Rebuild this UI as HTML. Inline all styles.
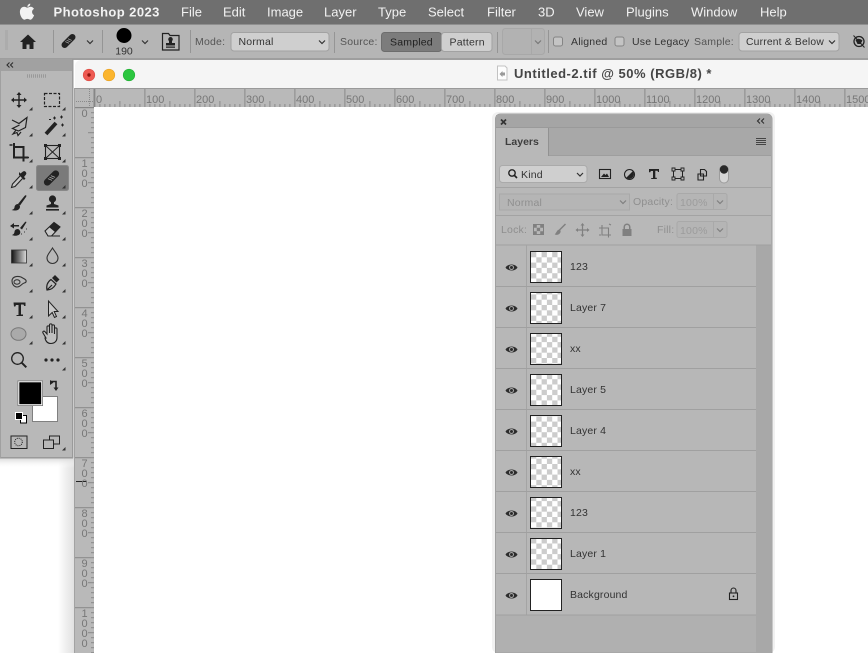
<!DOCTYPE html>
<html><head><meta charset="utf-8"><title>Photoshop 2023</title>
<style>
html,body{margin:0;padding:0;width:868px;height:653px;overflow:hidden;background:#fff}
svg{display:block;position:absolute;left:0;top:0;filter:blur(.3px)}
text{font-family:"Liberation Sans",sans-serif;font-size:11px;fill:#2b2b2b}
.m{font-size:13px;fill:#f2f2f2}
.o{font-size:10.5px;fill:#333;letter-spacing:.2px}
.l{font-size:10.5px;fill:#333;letter-spacing:.15px}
.d{font-size:10.5px;fill:#8f8f8f;letter-spacing:.2px}
.r{font-size:11px;fill:#777}
</style></head><body>
<svg width="868" height="653" viewBox="0 0 868 653" xmlns="http://www.w3.org/2000/svg">
<defs>
<linearGradient id="sh" x1="0" x2="1" y1="0" y2="0"><stop offset="0" stop-color="#fff"/><stop offset="1" stop-color="#e0e0e0"/></linearGradient>
<linearGradient id="shb" x1="0" x2="0" y1="0" y2="1"><stop offset="0" stop-color="#d8d8d8"/><stop offset="1" stop-color="#fff" stop-opacity="0"/></linearGradient>
<linearGradient id="gr" x1="0" x2="1" y1="0" y2="0"><stop offset="0" stop-color="#111"/><stop offset="1" stop-color="#ddd"/></linearGradient>
<pattern id="ck" width="10.6" height="10.6" patternUnits="userSpaceOnUse" x="531" y="252"><rect width="10.6" height="10.6" fill="#fff"/><rect width="5.3" height="5.3" fill="#ccc"/><rect x="5.3" y="5.3" width="5.3" height="5.3" fill="#ccc"/></pattern>
<pattern id="hr" width="50" height="19" patternUnits="userSpaceOnUse" x="94.4" y="88">
<rect x="0" y="0" width="1" height="19" fill="#888"/>
<path d="M5.500 16v3M10.500 16v3M15.500 16v3M20.500 16v3M25.500 13v6M30.500 16v3M35.500 16v3M40.500 16v3M45.500 16v3" stroke="#888" stroke-width="1"/>
</pattern>
<pattern id="vr" width="19" height="50" patternUnits="userSpaceOnUse" x="75" y="107.2">
<rect x="0" y="0" width="19" height="1" fill="#888"/>
<path d="M16 5.500h3M16 10.500h3M16 15.500h3M16 20.500h3M13 25.500h6M16 30.500h3M16 35.500h3M16 40.500h3M16 45.500h3" stroke="#888" stroke-width="1"/>
</pattern>
<g id="eye"><path d="M-6 0C-3.500-4 3.500-4 6 0C3.500 4-3.500 4-6 0Z" fill="#2c2c2c"/><circle r="2.400" fill="#b8b8b8"/><circle r="1.500" fill="#2c2c2c"/></g>
<path id="tri" d="M3.500 0V3.500H0Z" fill="#333"/>
<path id="ch" d="M-3-1.500L0 1.500L3-1.500" fill="none" stroke="#333" stroke-width="1.200"/>
<g id="band"><g transform="rotate(-45)"><rect x="-11" y="-4" width="22" height="8" rx="4" fill="#222"/><path d="M-3.500-2.500l2 5M-1-2.500l2 5M1.500-2.500l2 5" stroke="#a8a8a8" stroke-width="1"/></g></g>
</defs>

<rect width="868" height="653" fill="#fff"/>
<rect x="0" y="0" width="868" height="24" fill="#6f6f6f"/>
<rect x="0" y="24" width="868" height="35" fill="#b5b5b5"/>
<rect x="0" y="24" width="868" height="1" fill="#8f8f8f"/>
<rect x="0" y="58" width="868" height="2" fill="#9e9e9e"/>
<rect x="0" y="60" width="868" height="593" fill="#fff"/>

<!-- menu -->
<path d="M31.500 6.500c-1.600 0-2.300.9-3.500.9s-2-.9-3.400-.9c-2.300 0-4.400 2-4.400 5.500 0 3.800 2.700 8 4.700 8 1.200 0 1.600-.8 3.100-.8s1.800.8 3.100.8c1.700 0 3.300-2.900 3.900-4.800-2.600-1-3-5.200-.1-6.500-.8-1.400-2.300-2.200-3.400-2.200zM28 6.600c-.1-1.600 1.200-3.100 3-3.400.2 1.800-1.300 3.300-3 3.400z" fill="#f2f2f2" transform="translate(.5 .5) scale(.96)"/>
<text x="53.500" y="16.500" class="m" style="font-weight:700;letter-spacing:.42px">Photoshop 2023</text>
<text x="181" y="16.500" class="m">File</text>
<text x="223" y="16.500" class="m">Edit</text>
<text x="267" y="16.500" class="m">Image</text>
<text x="324" y="16.500" class="m">Layer</text>
<text x="378" y="16.500" class="m">Type</text>
<text x="428" y="16.500" class="m">Select</text>
<text x="487" y="16.500" class="m">Filter</text>
<text x="538" y="16.500" class="m">3D</text>
<text x="576" y="16.500" class="m">View</text>
<text x="626" y="16.500" class="m">Plugins</text>
<text x="691" y="16.500" class="m">Window</text>
<text x="760" y="16.500" class="m">Help</text>

<!-- options bar -->
<path d="M5 31h3M5 33h3M5 35h3M5 37h3M5 39h3M5 41h3M5 43h3M5 45h3M5 47h3M5 49h3" stroke="#a2a2a2" stroke-width="1"/>
<path d="M20 42l8-7.500 8 7.500h-2.500v7h-4v-4.500h-3v4.500h-4v-7z" fill="#222"/>
<path d="M53.500 30v23M102.500 30v23M190.500 30v23M334.500 32v21M497.500 32v21M548.500 30v23" stroke="#959595" stroke-width="1"/>
<use href="#band" transform="translate(68.500 41) scale(.78)"/>
<use href="#ch" x="90" y="42"/>
<circle cx="124" cy="35.500" r="7.500" fill="#000"/>
<text x="124" y="54.500" text-anchor="middle" style="font-size:10.500px;fill:#333">190</text>
<use href="#ch" x="145" y="42"/>
<path d="M162.500 33.500h6l1.500 2h9v14.500h-16.500z" fill="none" stroke="#222" stroke-width="1.200"/>
<path d="M170.500 37a2.300 2.300 0 0 1 1.500 4v2h3v2.500h-9V43h3v-2a2.300 2.300 0 0 1 1.500-4zM166 46.500h9v1.200h-9z" fill="#222"/>
<text x="195" y="45" class="o" style="fill:#555">Mode:</text>
<rect x="231" y="32.500" width="98" height="18.500" rx="3" fill="#cfcfcf" stroke="#a2a2a2"/>
<text x="238.500" y="45" class="o">Normal</text>
<use href="#ch" x="322" y="42"/>
<text x="340" y="45" class="o" style="fill:#555">Source:</text>
<rect x="381.500" y="32.500" width="60" height="19" rx="3" fill="#7c7c7c" stroke="#6d6d6d"/>
<text x="390" y="45.500" class="o" style="fill:#1f1f1f">Sampled</text>
<rect x="441.500" y="32.500" width="50.500" height="19" rx="3" fill="#cfcfcf" stroke="#a2a2a2"/>
<text x="449.500" y="45.500" class="o">Pattern</text>
<rect x="502.500" y="28.500" width="42" height="26" rx="3" fill="#b2b2b2" stroke="#a8a8a8"/>
<path d="M531.500 29v25" stroke="#a8a8a8"/>
<use href="#ch" x="538" y="42" opacity=".45"/>
<rect x="553.500" y="37" width="9" height="9" rx="2" fill="#c4c4c4" stroke="#858585"/>
<text x="571" y="45" class="o">Aligned</text>
<rect x="615" y="37" width="9" height="9" rx="2" fill="#c4c4c4" stroke="#858585"/>
<text x="632" y="45" class="o">Use Legacy</text>
<text x="694" y="45" class="o" style="fill:#555">Sample:</text>
<rect x="739" y="32.500" width="100" height="18.500" rx="3" fill="#cfcfcf" stroke="#a2a2a2"/>
<text x="746" y="45" class="o" style="font-size:10.300px">Current &amp; Below</text>
<use href="#ch" x="832" y="42"/>
<circle cx="859" cy="41.500" r="5" fill="none" stroke="#222" stroke-width="1.300"/>
<path d="M855.500 40a5 5 0 0 1 7 .5l-2 3.500h-3z" fill="#222"/>
<path d="M853.500 35.500l11 12" stroke="#222" stroke-width="1"/>

<!-- doc window -->
<path d="M75 88V66a6 6 0 0 1 6-6H868V88Z" fill="#f5f5f5"/>
<rect x="75" y="88" width="793" height="1" fill="#9a9a9a"/>
<circle cx="89" cy="75" r="5.800" fill="#ee5a52" stroke="#dd4b43" stroke-width=".6"/><circle cx="89" cy="75" r="1.700" fill="#8f1510"/>
<circle cx="109" cy="75" r="5.800" fill="#fbb52e" stroke="#e8a020" stroke-width=".6"/>
<circle cx="129" cy="75" r="5.800" fill="#2cc63f" stroke="#20ae33" stroke-width=".6"/>
<path d="M497.500 66h7.500l2 2v12h-9.500z" fill="#fdfdfd" stroke="#c2c2c2"/>
<path d="M499.500 74l3-3v1.500h2.500v3h-2.500V77z" fill="#999"/>
<text x="514" y="78" style="font-size:13px;font-weight:700;fill:#454545;letter-spacing:.52px">Untitled-2.tif @ 50% (RGB/8) *</text>

<!-- rulers -->
<rect x="75" y="89" width="793" height="18" fill="#b9b9b9"/>
<rect x="75" y="89" width="19" height="564" fill="#b9b9b9"/>
<rect x="94" y="89" width="774" height="18" fill="url(#hr)"/>
<rect x="75" y="107" width="19" height="546" fill="url(#vr)"/>
<rect x="75" y="107" width="19" height="1" fill="#858585"/>
<rect x="93.500" y="89" width="1" height="18" fill="#858585"/>
<path d="M76 101.500h17M89.500 89v18" stroke="#8a8a8a" stroke-dasharray="1 1" fill="none"/>
<rect x="74" y="88" width="1" height="565" fill="#a2a2a2"/>
<rect x="76" y="481" width="11" height="1" fill="#222"/>
<g>
<text x="96" y="103" class="r">0</text><text x="146" y="103" class="r">100</text><text x="196" y="103" class="r">200</text><text x="246" y="103" class="r">300</text><text x="296" y="103" class="r">400</text><text x="346" y="103" class="r">500</text><text x="396" y="103" class="r">600</text><text x="446" y="103" class="r">700</text><text x="496" y="103" class="r">800</text><text x="546" y="103" class="r">900</text><text x="596" y="103" class="r">1000</text><text x="646" y="103" class="r">1100</text><text x="696" y="103" class="r">1200</text><text x="746" y="103" class="r">1300</text><text x="796" y="103" class="r">1400</text><text x="846" y="103" class="r">1500</text>
</g>
<g text-anchor="middle">
<text x="84.500" y="117" class="r">0</text>
<text x="84.500" y="167" class="r">1</text><text x="84.500" y="177" class="r">0</text><text x="84.500" y="187" class="r">0</text>
<text x="84.500" y="217" class="r">2</text><text x="84.500" y="227" class="r">0</text><text x="84.500" y="237" class="r">0</text>
<text x="84.500" y="267" class="r">3</text><text x="84.500" y="277" class="r">0</text><text x="84.500" y="287" class="r">0</text>
<text x="84.500" y="317" class="r">4</text><text x="84.500" y="327" class="r">0</text><text x="84.500" y="337" class="r">0</text>
<text x="84.500" y="367" class="r">5</text><text x="84.500" y="377" class="r">0</text><text x="84.500" y="387" class="r">0</text>
<text x="84.500" y="417" class="r">6</text><text x="84.500" y="427" class="r">0</text><text x="84.500" y="437" class="r">0</text>
<text x="84.500" y="467" class="r">7</text><text x="84.500" y="477" class="r">0</text><text x="84.500" y="487" class="r">0</text>
<text x="84.500" y="517" class="r">8</text><text x="84.500" y="527" class="r">0</text><text x="84.500" y="537" class="r">0</text>
<text x="84.500" y="567" class="r">9</text><text x="84.500" y="577" class="r">0</text><text x="84.500" y="587" class="r">0</text>
<text x="84.500" y="617" class="r">1</text><text x="84.500" y="627" class="r">0</text><text x="84.500" y="637" class="r">0</text><text x="84.500" y="647" class="r">0</text>
</g>

<!-- shadow around toolbar -->
<rect x="58" y="458" width="16" height="195" fill="url(#sh)"/>
<rect x="0" y="458" width="74" height="10" fill="url(#shb)"/>

<!-- toolbar -->
<rect x="0" y="59" width="73" height="399" fill="#b8b8b8"/>
<rect x="0" y="59" width="73" height="12" fill="#a1a1a1"/>
<rect x="72" y="59" width="1.500" height="399" fill="#9a9a9a"/>
<rect x="0" y="457" width="73" height="1.500" fill="#9a9a9a"/>
<rect x="0" y="59" width="1" height="399" fill="#a0a0a0"/>
<path d="M9.500 62.500l-2.500 2.500 2.500 2.500M13 62.500l-2.500 2.500 2.500 2.500" fill="none" stroke="#2e2e2e" stroke-width="1.100"/>
<path d="M27 76h19" stroke="#999" stroke-width="3.500" stroke-dasharray="1 1"/>

<!-- move -->
<path d="M19 93v14M12 100h14" stroke="#222" stroke-width="1.400"/>
<path d="M19 92l-2.500 3h5zM19 108l-2.500-3h5zM11 100l3-2.500v5zM27 100l-3-2.500v5z" fill="#222"/>
<!-- marquee -->
<rect x="44.500" y="93.500" width="15" height="13" fill="none" stroke="#222" stroke-width="1.200" stroke-dasharray="3 1.500"/>
<!-- lasso -->
<path d="M12 120l7 3.500 8-6-1.500 10-7 3.500-6-2.500 7-3.500" fill="none" stroke="#222" stroke-width="1.200"/>
<path d="M16 130l-3 4 4-1.500 1 3 3-3.500" fill="none" stroke="#222" stroke-width="1.200"/>
<!-- wand -->
<path d="M46 134l10-11" stroke="#222" stroke-width="3.800"/>
<path d="M53 118h3M54.500 116.500v3M60 117h3M61.500 115.500v3M61 125h3M62.500 123.500v3M49 119.500h2" stroke="#222" stroke-width="1"/>
<!-- crop -->
<path d="M14 143v14.500h14" fill="none" stroke="#222" stroke-width="2"/>
<path d="M14 147h9.500v14.500" fill="none" stroke="#222" stroke-width="2"/>
<path d="M9.500 145h3M27 157.500h2" stroke="#222" stroke-width="1.500"/>
<!-- frame -->
<rect x="45.500" y="145.500" width="14" height="13" fill="none" stroke="#222" stroke-width="1.100"/>
<path d="M45.500 145.500l14 13M59.500 145.500l-14 13" stroke="#222" stroke-width="1"/>
<path d="M44 144h3v3h-3zM58 144h3v3h-3zM44 157h3v3h-3zM58 157h3v3h-3z" fill="#222"/>
<!-- eyedropper -->
<path d="M20 176l-7.500 8-1 3.500 3.500-1 7.500-8" fill="#c5c5c5" stroke="#222" stroke-width="1.100"/>
<path d="M19 175l5 5 1.500-1.500-1.500-1.500 2-2.500a2.200 2.200 0 0 0-3-3l-2.500 2-1.500-1.500z" fill="#222"/>
<!-- healing selected -->
<rect x="36.500" y="165.500" width="32" height="25" rx="2" fill="#7a7a7a" stroke="#888"/>
<use href="#band" transform="translate(51.500 178) scale(.85)"/>
<!-- brush -->
<path d="M18 204l6.500-8c1.500-1.500 2.500-.5 1.500 1l-6 8.500z" fill="#222"/>
<path d="M18 204c-2.500 0-3.500 2-3.500 3.500-.2 1.400-1.200 2-3 2.500 3.500 1.200 8 .5 8.500-3 .2-1-.8-2.500-2-3z" fill="#222"/>
<!-- stamp -->
<circle cx="52.500" cy="199" r="3.600" fill="#222"/><path d="M51 201h3v3l4.500 1.500v2H46.500v-2l4.500-1.500z" fill="#222"/><rect x="46" y="209" width="13" height="1.600" fill="#222"/>
<!-- history brush -->
<path d="M20 228l5-6c1-1 2 0 1 1l-4 6.500z" fill="#222"/>
<path d="M18 229c-2.500 0-3.500 1.500-3.500 3-.2 1.500-1 2.500-2.500 3 3 1.500 8 .8 8.300-2.500.2-1.500-1-3-2.300-3.500z" fill="#222"/>
<path d="M10 226l4-3v2h5v1.500h-5v2z" fill="#222"/>
<path d="M21 234h1M24 232h1M26 229h1" stroke="#333"/>
<!-- eraser -->
<path d="M45 231l9-8.500 6 4.500-8.500 9h-3.500z" fill="#c5c5c5" stroke="#222" stroke-width="1.100"/>
<path d="M49 227l5-4.500 6 4.500-5 5z" fill="#222"/>
<path d="M52 236h8" stroke="#222" stroke-width="1"/>
<!-- gradient -->
<rect x="11.500" y="250" width="15" height="13" fill="url(#gr)" stroke="#333" stroke-width=".8"/>
<!-- drop -->
<path d="M52.500 248c-2 3.500-5.500 6.500-5.500 10a5.500 5.500 0 0 0 11 0c0-3.500-3.500-6.500-5.500-10z" fill="none" stroke="#333" stroke-width="1.100"/>
<!-- blob -->
<path d="M12 281c0-4 4.500-5.500 9-4l3.500 2c2.500 1.500 2 3.500-.3 4-2.500.5-3.500 4-7 4-3.200 0-5.200-3-5.200-6z" fill="none" stroke="#333" stroke-width="1.100"/>
<ellipse cx="17" cy="282" rx="3" ry="2.200" fill="none" stroke="#333"/>
<!-- pen -->
<path d="M47 290c-.8-4 .5-8 4-10.500l5 4.500c-2 3.500-5 6-9 6zM47 290l5-5" fill="#b8b8b8" stroke="#222" stroke-width="1.200"/>
<path d="M52 278l3-3 4.500 4.500-3 3z" fill="#222"/>
<!-- type -->
<path d="M13.500 302.500h12v3.500h-1.300l-.7-1.500h-2.500v10h2v1.500h-6.500V315h2v-10h-2.500l-.7 1.500h-1.300z" fill="#222"/>
<!-- arrow -->
<path d="M48.500 301v15l3.700-3.500 2.300 5 2-1-2.300-5H58z" fill="#c9c9c9" stroke="#222" stroke-width="1"/>
<!-- ellipse -->
<ellipse cx="18.500" cy="334" rx="7.500" ry="6.300" fill="#aaa" stroke="#777" stroke-width="1"/>
<!-- hand -->
<path d="M46 338l-3-5c-.8-1.500 1-2.500 2-1.300l2 2.300v-7c0-1.500 2.400-1.500 2.500 0V333v-8c0-1.500 2.500-1.500 2.500 0V333v-7c0-1.500 2.500-1.500 2.500 0v8-5c0-1.500 2.500-1.500 2.500 0v8.500c0 4-3 6-6 6s-5.200-1.500-6-5.500z" fill="#bfbfbf" stroke="#222" stroke-width="1.100"/>
<!-- zoom -->
<circle cx="17.500" cy="358.500" r="5.800" fill="none" stroke="#222" stroke-width="1.300"/>
<path d="M21.800 362.800l4.500 4.500" stroke="#222" stroke-width="2"/>
<!-- more -->
<circle cx="46" cy="360" r="1.600" fill="#222"/><circle cx="52" cy="360" r="1.600" fill="#222"/><circle cx="58" cy="360" r="1.600" fill="#222"/>
<!-- triangles -->
<use href="#tri" x="29" y="107"/><use href="#tri" x="62" y="107"/>
<use href="#tri" x="29" y="133"/><use href="#tri" x="62" y="133"/>
<use href="#tri" x="29" y="159"/><use href="#tri" x="62" y="159"/>
<use href="#tri" x="29" y="185"/><use href="#tri" x="62" y="185"/>
<use href="#tri" x="29" y="211"/><use href="#tri" x="62" y="211"/>
<use href="#tri" x="29" y="237"/><use href="#tri" x="62" y="237"/>
<use href="#tri" x="29" y="263"/><use href="#tri" x="62" y="263"/>
<use href="#tri" x="29" y="289"/><use href="#tri" x="62" y="289"/>
<use href="#tri" x="29" y="315"/><use href="#tri" x="62" y="315"/>
<use href="#tri" x="29" y="341"/><use href="#tri" x="62" y="341"/>
<use href="#tri" x="62" y="367"/>
<use href="#tri" x="62" y="447"/>
<!-- colors -->
<rect x="32.500" y="396.500" width="25" height="25" fill="#fff" stroke="#808080"/>
<rect x="18" y="381" width="24.500" height="24.500" fill="#000" stroke="#777"/>
<rect x="18.800" y="381.800" width="22.900" height="22.900" fill="none" stroke="#fff"/>
<rect x="20.500" y="415.500" width="6" height="7.500" fill="#fff" stroke="#000"/>
<rect x="15.500" y="412.500" width="7" height="7" fill="#000" stroke="#fff"/>
<path d="M50.500 381.500h5.500v6" fill="none" stroke="#222" stroke-width="1.600"/>
<path d="M53.500 382.500l-3.500-2.500v5zM56 391l-2.500-3.500h5z" fill="#222"/>
<rect x="11" y="436" width="16" height="12.500" fill="none" stroke="#222"/>
<circle cx="18.500" cy="442" r="3.800" fill="none" stroke="#222" stroke-dasharray="1 1"/>
<rect x="49.500" y="436" width="10" height="8" fill="#b8b8b8" stroke="#222"/>
<rect x="43.500" y="440" width="10" height="8.500" fill="#b8b8b8" stroke="#222"/>

<!-- layers panel -->
<rect x="492" y="112" width="283" height="541" fill="#888" opacity=".12" rx="6"/>
<path d="M495.500 653V119a5 5 0 0 1 5-5H767a5 5 0 0 1 5 5V653Z" fill="#b0b0b0" stroke="#a0a0a0"/>
<rect x="496" y="115" width="275" height="13" fill="#a5a5a5"/>
<rect x="496" y="127.500" width="275" height="1" fill="#8f8f8f"/>
<rect x="496" y="128" width="275" height="28" fill="#a8a8a8"/>
<rect x="496" y="128" width="52" height="29" fill="#b8b8b8"/>
<rect x="548" y="128" width="1" height="28" fill="#929292"/>
<rect x="549" y="155.500" width="222" height="1" fill="#959595"/>
<path d="M501 119.500l5 5M506 119.500l-5 5" stroke="#333" stroke-width="1.700"/>
<path d="M760 118.500l-2.500 2.500 2.500 2.500M764 118.500l-2.500 2.500 2.500 2.500" fill="none" stroke="#2e2e2e" stroke-width="1.100"/>
<text x="505" y="145" style="font-size:10.500px;font-weight:700;fill:#3f3f3f">Layers</text>
<path d="M756 138.500h10M756 140.500h10M756 142.500h10M756 144.500h10" stroke="#444" stroke-width="1"/>
<rect x="496" y="156" width="275" height="89" fill="#b8b8b8"/>
<rect x="496" y="187" width="275" height="1" fill="#a3a3a3"/>
<rect x="496" y="215" width="275" height="1" fill="#a3a3a3"/>
<!-- filter row -->
<rect x="499.500" y="165.500" width="87.500" height="17" rx="3" fill="#cfcfcf" stroke="#aaa"/>
<circle cx="512" cy="173" r="3.200" fill="none" stroke="#222" stroke-width="1.400"/>
<path d="M514.500 175.500l2.500 2.500" stroke="#222" stroke-width="1.600"/>
<text x="521" y="178" class="o">Kind</text>
<use href="#ch" x="580" y="174.500"/>
<rect x="599.500" y="169.500" width="11" height="9" fill="none" stroke="#222" stroke-width="1.100"/>
<path d="M601 177l3-3.500 1.500 1.500 1.500-1.500 2 3.500z" fill="#222"/>
<circle cx="629.500" cy="174.500" r="5" fill="none" stroke="#222" stroke-width="1.100"/>
<path d="M633 171a5 5 0 0 1-7 7z" fill="#222"/>
<path d="M649 169h10v3h-1l-.5-1.300h-2.200v7h1.500v1.300h-5.600V178H653v-7h-2.200l-.5 1.300h-1.300z" fill="#222"/>
<rect x="673.500" y="169.500" width="9" height="9" fill="none" stroke="#222"/>
<path d="M672 168h3v3h-3zM681 168h3v3h-3zM672 177h3v3h-3zM681 177h3v3h-3z" fill="#b8b8b8" stroke="#222" stroke-width=".9"/>
<path d="M700.500 169.500h4l2 2v4.500h-6zM698 174h5.500v6H698z" fill="#b8b8b8" stroke="#222" stroke-width="1.100"/>
<rect x="719.500" y="165.500" width="9" height="17.500" rx="4.500" fill="#d6d6d6" stroke="#9c9c9c"/>
<circle cx="724" cy="169.500" r="4.200" fill="#2a2a2a"/>
<!-- normal row -->
<rect x="499.500" y="194" width="130" height="16" fill="#b5b5b5" stroke="#a9a9a9"/>
<text x="507" y="206" class="d">Normal</text>
<use href="#ch" x="623" y="202" opacity=".4"/>
<text x="633" y="205" class="d">Opacity:</text>
<rect x="677" y="193.500" width="50" height="16" rx="2" fill="#b5b5b5" stroke="#a9a9a9"/><path d="M713.500 194v15" stroke="#a9a9a9"/>
<text x="680" y="206" class="d" style="fill:#9c9c9c">100%</text>
<use href="#ch" x="720" y="202" opacity=".4"/>
<!-- lock row -->
<text x="501" y="233" class="d">Lock:</text>
<rect x="533.500" y="224.500" width="10" height="10" fill="#b8b8b8" stroke="#808080"/>
<path d="M533.500 224.500h3.300v3.300h-3.300zM540.200 224.500h3.300v3.300h-3.300zM536.800 227.800h3.300v3.300h-3.300zM533.500 231.200h3.300v3.300h-3.300zM540.200 231.200h3.300v3.300h-3.300z" fill="#808080"/>
<path d="M556 234l2-3c1-1.200 2.200-.4 1.800 1-.5 1.500-2.300 2.300-3.800 2zM559.500 230l6-6" stroke="#808080" stroke-width="1.500" fill="#808080"/>
<path d="M582.500 224v12M576.500 230h12" stroke="#808080" stroke-width="1.200"/>
<path d="M582.500 223l-2 2.500h4zM582.500 237l-2-2.500h4zM575.500 230l2.500-2v4zM589.500 230l-2.500-2v4z" fill="#808080"/>
<path d="M602 225v10h9M599 228h9.500v9.500M609 224l2 1M599 235h2" fill="none" stroke="#808080" stroke-width="1.100"/>
<path d="M623.500 229v-2a3.500 3.500 0 0 1 7 0v2h1v7h-9v-7zM625 229h4v-2a2 2 0 0 0-4 0z" fill="#808080" fill-rule="evenodd"/>
<text x="657" y="233" class="d">Fill:</text>
<rect x="677" y="221.500" width="50" height="16" rx="2" fill="#b5b5b5" stroke="#a9a9a9"/><path d="M713.500 222v15" stroke="#a9a9a9"/>
<text x="680" y="234" class="d" style="fill:#9c9c9c">100%</text>
<use href="#ch" x="720" y="230" opacity=".4"/>

<!-- list -->
<rect x="496" y="245" width="260" height="370" fill="#b7b7b7"/>
<rect x="756" y="245" width="15" height="408" fill="#a8a8a8"/>
<rect x="496" y="244.500" width="275" height="1" fill="#a0a0a0"/>
<rect x="526" y="245" width="1" height="370" fill="#a4a4a4"/>
<g fill="#a0a0a0"><rect x="496" y="286" width="260" height="1"/><rect x="496" y="327" width="260" height="1"/><rect x="496" y="368" width="260" height="1"/><rect x="496" y="409" width="260" height="1"/><rect x="496" y="450" width="260" height="1"/><rect x="496" y="491" width="260" height="1"/><rect x="496" y="532" width="260" height="1"/><rect x="496" y="573" width="260" height="1"/><rect x="496" y="614.500" width="260" height="1"/></g>
<g stroke="#222" stroke-width="1">
<rect x="530.500" y="251.500" width="31" height="31" fill="url(#ck)"/>
<rect x="530.500" y="292.500" width="31" height="31" fill="url(#ck)"/>
<rect x="530.500" y="333.500" width="31" height="31" fill="url(#ck)"/>
<rect x="530.500" y="374.500" width="31" height="31" fill="url(#ck)"/>
<rect x="530.500" y="415.500" width="31" height="31" fill="url(#ck)"/>
<rect x="530.500" y="456.500" width="31" height="31" fill="url(#ck)"/>
<rect x="530.500" y="497.500" width="31" height="31" fill="url(#ck)"/>
<rect x="530.500" y="538.500" width="31" height="31" fill="url(#ck)"/>
<rect x="530.500" y="579.500" width="31" height="31" fill="#fff"/>
</g>
<use href="#eye" x="511.500" y="267.500"/><use href="#eye" x="511.500" y="308.500"/><use href="#eye" x="511.500" y="349.500"/><use href="#eye" x="511.500" y="390.500"/><use href="#eye" x="511.500" y="431.500"/><use href="#eye" x="511.500" y="472.500"/><use href="#eye" x="511.500" y="513.500"/><use href="#eye" x="511.500" y="554.500"/><use href="#eye" x="511.500" y="595.500"/>
<text x="570" y="270" class="l">123</text>
<text x="570" y="311" class="l">Layer 7</text>
<text x="570" y="352" class="l">xx</text>
<text x="570" y="393" class="l">Layer 5</text>
<text x="570" y="434" class="l">Layer 4</text>
<text x="570" y="475" class="l">xx</text>
<text x="570" y="516" class="l">123</text>
<text x="570" y="557" class="l">Layer 1</text>
<text x="570" y="598" class="l">Background</text>
<path d="M731 593v-2.500a2.500 2.500 0 0 1 5 0v2.500" fill="none" stroke="#222" stroke-width="1.100"/>
<rect x="729.500" y="593" width="8" height="6.500" fill="none" stroke="#222" stroke-width="1.100"/>
<circle cx="733.500" cy="596.300" r=".9" fill="#222"/>
</svg>
</body></html>
